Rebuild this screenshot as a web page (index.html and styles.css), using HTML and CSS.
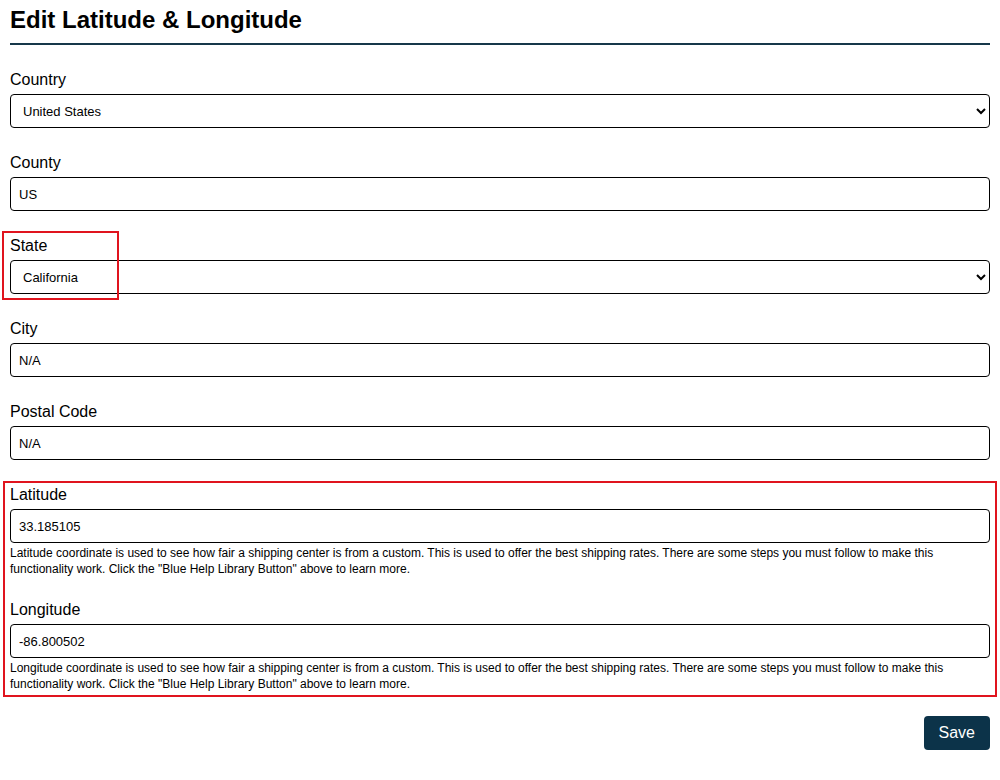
FILE: index.html
```html
<!DOCTYPE html>
<html>
<head>
<meta charset="UTF-8">
<meta name="viewport" content="width=device-width, initial-scale=1">
<link rel="stylesheet" href="styles.css">
</head>
<body>

<div class="page">
  <h1 class="title">Edit Latitude &amp; Longitude</h1>

  <form class="edit-form" onsubmit="return false;">
    <div class="field">
      <label for="country">Country</label>
      <select id="country" class="control">
        <option>United States</option>
        <option>Canada</option>
        <option>Mexico</option>
      </select>
    </div>

    <div class="field">
      <label for="county">County</label>
      <input type="text" id="county" class="control" value="US">
    </div>

    <div class="field marked">
      <label for="state">State</label>
      <select id="state" class="control">
        <option>California</option>
        <option>Alabama</option>
        <option>Texas</option>
      </select>
      <span class="mark-box"></span>
    </div>

    <div class="field">
      <label for="city">City</label>
      <input type="text" id="city" class="control" value="N/A">
    </div>

    <div class="field">
      <label for="postal">Postal Code</label>
      <input type="text" id="postal" class="control" value="N/A">
    </div>

    <div class="coords">
      <div class="field">
        <label for="lat">Latitude</label>
        <input type="text" id="lat" class="control" value="33.185105">
        <p class="help">Latitude coordinate is used to see how fair a shipping center is from a custom. This is used to offer the best shipping rates. There are some steps you must follow to make this functionality work. Click the "Blue Help Library Button" above to learn more.</p>
      </div>

      <div class="field">
        <label for="lng">Longitude</label>
        <input type="text" id="lng" class="control" value="-86.800502">
        <p class="help">Longitude coordinate is used to see how fair a shipping center is from a custom. This is used to offer the best shipping rates. There are some steps you must follow to make this functionality work. Click the "Blue Help Library Button" above to learn more.</p>
      </div>
    </div>

    <div class="actions">
      <button type="submit" class="btn-save">Save</button>
    </div>
  </form>
</div>

</body>
</html>
```

FILE: styles.css
```css
body {
  margin: 0;
  font-family: "Liberation Sans", Arial, sans-serif;
  color: #000;
  background: #fff;
}

.page {
  padding: 0 10px;
}

.title {
  margin: 0;
  padding: 6px 0 9px;
  font-size: 24px;
  line-height: 28px;
  font-weight: bold;
  border-bottom: 2px solid #17384a;
}

.edit-form {
  margin-top: 26px;
}

.field {
  margin-bottom: 26px;
}

.field label {
  display: block;
  font-size: 16px;
  line-height: 18px;
  margin-bottom: 5px;
}

.control {
  display: block;
  width: 100%;
  height: 34px;
  box-sizing: border-box;
  border: 1px solid #000;
  border-radius: 4px;
  padding: 0 8px;
  font-family: "Liberation Sans", Arial, sans-serif;
  font-size: 13px;
  color: #000;
  background: #fff;
}

/* red annotation boxes */
.marked {
  position: relative;
}

.mark-box {
  position: absolute;
  left: -8px;
  top: -6px;
  width: 113px;
  height: 65px;
  border: 2px solid #e0141e;
  pointer-events: none;
}

.coords {
  margin: -5px -7px 0;
  padding: 3px 5px 3px;
  border: 2px solid #e0141e;
}

.coords .field {
  margin-bottom: 24px;
}

.coords .field:last-child {
  margin-bottom: 0;
}

.help {
  margin: 2px 0 0;
  font-size: 12px;
  line-height: 16px;
}

.actions {
  display: flex;
  justify-content: flex-end;
  margin-top: 19px;
}

.btn-save {
  height: 34px;
  padding: 0 15px;
  border: none;
  border-radius: 4px;
  background: #0c3349;
  color: #fff;
  font-family: "Liberation Sans", Arial, sans-serif;
  font-size: 16px;
  cursor: pointer;
}
```
